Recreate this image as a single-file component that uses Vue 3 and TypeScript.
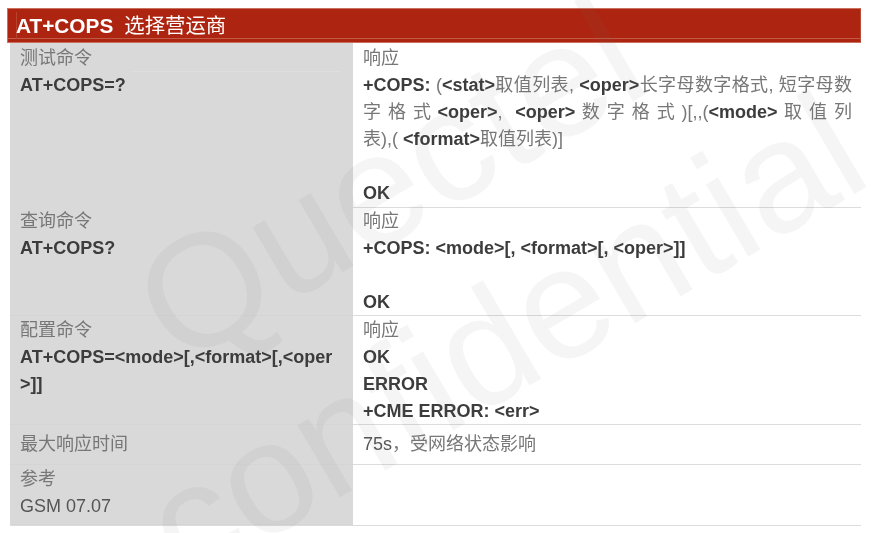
<script setup lang="ts">
const title = '选择营运商'
</script>

<template>
  <div class="page">
    <div class="doc">
      <div class="head"><b>AT+COPS</b><span class="cn">{{ title }}</span></div>
      <div class="row r1">
        <div class="left">
          <div class="ln cn-t rule">测试命令</div>
          <div class="ln b">AT+COPS=?</div>
        </div>
        <div class="right">
          <div class="ln cn-t">响应</div>
          <div class="ln just"><b>+COPS:</b> (<b>&lt;stat&gt;</b>取值列表, <b>&lt;oper&gt;</b>长字母数字格式, 短字母数</div>
          <div class="ln spread">
            <span class="sp">字格式</span>
            <span class="comma"><b>&lt;oper&gt;</b>,</span>
            <b>&lt;oper&gt;</b>
            <span class="sp">数字格式</span>
            <span>)[,,(<b>&lt;mode&gt;</b></span>
            <span class="sp">取值列</span>
          </div>
          <div class="ln cn-t">表),( <b>&lt;format&gt;</b>取值列表)]</div>
          <div class="ln">&nbsp;</div>
          <div class="ln b">OK</div>
        </div>
      </div>
      <div class="row r2">
        <div class="left">
          <div class="ln cn-t">查询命令</div>
          <div class="ln b">AT+COPS?</div>
        </div>
        <div class="right">
          <div class="ln cn-t">响应</div>
          <div class="ln b">+COPS: &lt;mode&gt;[, &lt;format&gt;[, &lt;oper&gt;]]</div>
          <div class="ln">&nbsp;</div>
          <div class="ln b">OK</div>
        </div>
      </div>
      <div class="row r3">
        <div class="left">
          <div class="ln cn-t">配置命令</div>
          <div class="ln b">AT+COPS=&lt;mode&gt;[,&lt;format&gt;[,&lt;oper</div>
          <div class="ln b">&gt;]]</div>
        </div>
        <div class="right">
          <div class="ln cn-t">响应</div>
          <div class="ln b">OK</div>
          <div class="ln b">ERROR</div>
          <div class="ln b">+CME ERROR: &lt;err&gt;</div>
        </div>
      </div>
      <div class="row r4">
        <div class="left"><div class="ln cn-t">最大响应时间</div></div>
        <div class="right"><div class="ln reg">75s<span class="cn-t">，受网络状态影响</span></div></div>
      </div>
      <div class="row r5">
        <div class="left">
          <div class="ln cn-t">参考</div>
          <div class="ln reg">GSM 07.07</div>
        </div>
        <div class="right"></div>
      </div>
    </div>
    <div class="wm wm1">Quectel</div>
    <div class="wm wm2">confidential</div>
  </div>
</template>

<style>
html, body { margin: 0; background: #fff; }
</style>

<style scoped>
.page {
  position: relative;
  width: 877px;
  height: 533px;
  overflow: hidden;
  background: #fff;
  font-family: "Liberation Sans", "Noto Sans CJK SC", sans-serif;
  font-size: 18px;
  color: #444;
  filter: blur(0.45px);
}
.doc { padding: 8px 16px 0 7px; }
.head {
  position: relative;
  height: 35px;
  box-sizing: border-box;
  background: #ad2510;
  border: 1px solid #c9705f;
  border-right-color: #b84a38;
  box-shadow: inset 0 -3px 0 #ad2510, inset 0 -4px 0 #bf5a47;
  color: #fff;
  font-size: 20.4px;
  line-height: 32px;
  padding-left: 8px;
  display: flex;
  gap: 11px;
  align-items: center;
}
.head::before {
  content: "";
  position: absolute;
  left: 8px;
  top: 3px;
  bottom: 3px;
  width: 1px;
  background: #b8442f;
}
.head b { color: #fff; position: relative; font-size: 20.8px; }
.row {
  display: grid;
  grid-template-columns: 343px 1fr;
  margin-left: 3px;
}
.left { background: #d9d9d9; padding-left: 10px; box-shadow: inset 0 -1px 0 #d5d5d5; }
.right { padding: 0 9px 0 10px; border-bottom: 1px solid #dcdcdc; box-sizing: border-box; }
.r1 { height: 164px; }
.r2 { height: 109px; }
.r3 { height: 109px; }
.r4 { height: 40px; }
.r5 { height: 60px; }
.r1 .left, .r1 .right { padding-top: 2px; }
.r2 .ln, .r3 .ln { top: 1px; }
.r4 .left, .r4 .right { padding-top: 6px; }
.r5 .left { padding-top: 1px; }
.r5 .right { border-bottom: 0; }
.ln { line-height: 27px; height: 27px; white-space: nowrap; font-weight: 400; position: relative; }
.b, b { font-weight: 700; color: #3c3c3c; }
.cn-t { color: #777; font-weight: 400; }
.reg { color: #555; }
.just { white-space: normal; text-align: justify; text-align-last: justify; color: #777; }
.spread { display: flex; justify-content: space-between; color: #777; }
.sp { letter-spacing: 7px; margin-right: -7px; }
.comma { margin-right: 6px; }
.rule::after {
  content: "";
  position: absolute;
  left: 110px;
  right: 12px;
  bottom: 0;
  height: 1px;
  background: #dedede;
}
.r5 { box-shadow: 0 1px 0 #dcdcdc; }
.wm {
  position: absolute;
  white-space: nowrap;
  transform-origin: 0 100%;
  transform: rotate(-30.5deg);
  color: rgba(110, 110, 110, 0.07);
  line-height: 1;
  pointer-events: none;
}
.wm1 { left: 192px; top: 230px; font-size: 160px; }
.wm2 { left: 199px; top: 450px; font-size: 158px; }
</style>
